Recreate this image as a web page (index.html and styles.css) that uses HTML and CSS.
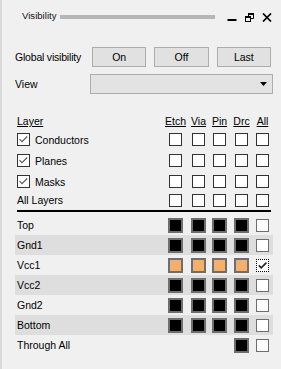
FILE: index.html
```html
<!DOCTYPE html>
<html>
<head>
<meta charset="utf-8">
<link rel="stylesheet" href="styles.css">
</head>
<body>
<div class="panel">
  <div class="titlebar">
    <span class="title">Visibility</span>
    <span class="grip"></span>
    <svg class="tb-icon tb-min" width="10" height="10" viewBox="0 0 10 10"><rect x="0.5" y="7" width="9" height="2" fill="#000"/></svg>
    <svg class="tb-icon tb-float" width="9" height="9" viewBox="0 0 9 9"><path d="M3.5 0.5h5v5h-5z" fill="none" stroke="#000" stroke-width="1"/><rect x="3" y="0" width="6" height="2" fill="#000"/><rect x="0.5" y="3.5" width="5" height="5" fill="#f0f0f0" stroke="#000" stroke-width="1"/><rect x="0" y="3" width="6" height="2" fill="#000"/></svg>
    <svg class="tb-icon tb-close" width="10" height="9" viewBox="0 0 10 9"><path d="M1 0.5L9 8.5M9 0.5L1 8.5" stroke="#000" stroke-width="1.7"/></svg>
  </div>
  <div class="content">
    <div class="form-row form-global">
      <span class="form-label tight">Global visibility</span>
      <div class="buttons">
        <button class="btn">On</button>
        <button class="btn">Off</button>
        <button class="btn">Last</button>
      </div>
    </div>
    <div class="form-row form-view">
      <span class="form-label">View</span>
      <div class="combo"><svg width="7" height="4" viewBox="0 0 7 4"><path d="M0 0h7L3.5 4z" fill="#000"/></svg></div>
    </div>

    <div class="grid-row head-row">
      <span class="row-label"><span class="u">Layer</span></span>
      <span class="slot"><span class="u">Etch</span></span>
      <span class="slot"><span class="u">Via</span></span>
      <span class="slot"><span class="u">Pin</span></span>
      <span class="slot"><span class="u">Drc</span></span>
      <span class="slot slot-all"><span class="u">All</span></span>
    </div>

    <div class="grid-row cat-row">
      <span class="row-label cat-label"><span class="chk"><svg width="11" height="11" viewBox="0 0 11 11"><path d="M1.5 5.2L4 7.7L9.2 2.5" fill="none" stroke="#5c5c5c" stroke-width="1.2"/></svg></span>Conductors</span>
      <span class="slot"><span class="box"></span></span>
      <span class="slot"><span class="box"></span></span>
      <span class="slot"><span class="box"></span></span>
      <span class="slot"><span class="box"></span></span>
      <span class="slot slot-all"><span class="box"></span></span>
    </div>
    <div class="grid-row cat-row">
      <span class="row-label cat-label"><span class="chk"><svg width="11" height="11" viewBox="0 0 11 11"><path d="M1.5 5.2L4 7.7L9.2 2.5" fill="none" stroke="#5c5c5c" stroke-width="1.2"/></svg></span>Planes</span>
      <span class="slot"><span class="box"></span></span>
      <span class="slot"><span class="box"></span></span>
      <span class="slot"><span class="box"></span></span>
      <span class="slot"><span class="box"></span></span>
      <span class="slot slot-all"><span class="box"></span></span>
    </div>
    <div class="grid-row cat-row">
      <span class="row-label cat-label"><span class="chk"><svg width="11" height="11" viewBox="0 0 11 11"><path d="M1.5 5.2L4 7.7L9.2 2.5" fill="none" stroke="#5c5c5c" stroke-width="1.2"/></svg></span>Masks</span>
      <span class="slot"><span class="box"></span></span>
      <span class="slot"><span class="box"></span></span>
      <span class="slot"><span class="box"></span></span>
      <span class="slot"><span class="box"></span></span>
      <span class="slot slot-all"><span class="box"></span></span>
    </div>
    <div class="grid-row all-row">
      <span class="row-label">All Layers</span>
      <span class="slot"><span class="box"></span></span>
      <span class="slot"><span class="box"></span></span>
      <span class="slot"><span class="box"></span></span>
      <span class="slot"><span class="box"></span></span>
      <span class="slot slot-all"><span class="box"></span></span>
    </div>

    <div class="sep"></div>

    <div class="grid-row layer-row">
      <span class="row-label">Top</span>
      <span class="slot"><span class="sw sw-black"></span></span>
      <span class="slot"><span class="sw sw-black"></span></span>
      <span class="slot"><span class="sw sw-black"></span></span>
      <span class="slot"><span class="sw sw-black"></span></span>
      <span class="slot slot-all"><span class="vbox"></span></span>
    </div>
    <div class="grid-row layer-row shaded">
      <span class="row-label">Gnd1</span>
      <span class="slot"><span class="sw sw-black"></span></span>
      <span class="slot"><span class="sw sw-black"></span></span>
      <span class="slot"><span class="sw sw-black"></span></span>
      <span class="slot"><span class="sw sw-black"></span></span>
      <span class="slot slot-all"><span class="vbox"></span></span>
    </div>
    <div class="grid-row layer-row">
      <span class="row-label">Vcc1</span>
      <span class="slot"><span class="sw sw-orange"></span></span>
      <span class="slot"><span class="sw sw-orange"></span></span>
      <span class="slot"><span class="sw sw-orange"></span></span>
      <span class="slot"><span class="sw sw-orange"></span></span>
      <span class="slot slot-all"><span class="vbox vbox-checked"><svg width="11" height="11" viewBox="0 0 11 11"><path d="M1.8 5.4L4.2 7.8L9.4 2.6" fill="none" stroke="#222" stroke-width="1.6"/></svg></span></span>
    </div>
    <div class="grid-row layer-row shaded">
      <span class="row-label">Vcc2</span>
      <span class="slot"><span class="sw sw-black"></span></span>
      <span class="slot"><span class="sw sw-black"></span></span>
      <span class="slot"><span class="sw sw-black"></span></span>
      <span class="slot"><span class="sw sw-black"></span></span>
      <span class="slot slot-all"><span class="vbox"></span></span>
    </div>
    <div class="grid-row layer-row">
      <span class="row-label">Gnd2</span>
      <span class="slot"><span class="sw sw-black"></span></span>
      <span class="slot"><span class="sw sw-black"></span></span>
      <span class="slot"><span class="sw sw-black"></span></span>
      <span class="slot"><span class="sw sw-black"></span></span>
      <span class="slot slot-all"><span class="vbox"></span></span>
    </div>
    <div class="grid-row layer-row shaded">
      <span class="row-label">Bottom</span>
      <span class="slot"><span class="sw sw-black"></span></span>
      <span class="slot"><span class="sw sw-black"></span></span>
      <span class="slot"><span class="sw sw-black"></span></span>
      <span class="slot"><span class="sw sw-black"></span></span>
      <span class="slot slot-all"><span class="vbox"></span></span>
    </div>
    <div class="grid-row layer-row">
      <span class="row-label">Through All</span>
      <span class="slot"></span>
      <span class="slot"></span>
      <span class="slot"></span>
      <span class="slot"><span class="sw sw-black"></span></span>
      <span class="slot slot-all"><span class="vbox"></span></span>
    </div>
  </div>
</div>
</body>
</html>
```

FILE: styles.css
```css
* { box-sizing: border-box; }

html, body {
  margin: 0;
  padding: 0;
  background: #f0f0f0;
}

body {
  font-family: "Liberation Sans", Arial, sans-serif;
  font-size: 10.5px;
  color: #000;
}

.panel {
  width: 281px;
  height: 369px;
  border-left: 2px solid #dadada;
  background: #f0f0f0;
}

/* title bar */
.titlebar {
  display: flex;
  align-items: flex-start;
  height: 32px;
  padding-left: 20px;
  padding-right: 9px;
}

.title {
  font-size: 9.6px;
  line-height: 12px;
  margin-top: 10px;
  color: #111;
}

.grip {
  flex: 1;
  height: 4px;
  margin-top: 15px;
  margin-left: 4px;
  margin-right: 12px;
  background: #b6b6b6;
}

.tb-icon { display: block; flex: none; }
.tb-min { margin-top: 12px; }
.tb-float { margin-top: 13px; margin-left: 8px; }
.tb-close { margin-top: 13px; margin-left: 8px; }

/* content */
.content {
  padding: 15px 8px 0 13px;
}

.form-row {
  display: flex;
  align-items: center;
  height: 20px;
}

.form-view { margin-top: 7px; }

.form-label {
  width: 75px;
  flex: none;
}

.tight { letter-spacing: -0.2px; }

.buttons {
  flex: 1;
  display: flex;
  gap: 8px;
  padding: 0 2px;
}

.btn {
  flex: 1;
  height: 20px;
  margin: 0;
  padding: 0;
  border: 1px solid #adadad;
  background: #e1e1e1;
  font-family: inherit;
  font-size: 10.5px;
  color: #000;
}

.combo {
  flex: 1;
  height: 20px;
  border: 1px solid #adadad;
  background: #e3e3e3;
  display: flex;
  align-items: center;
  justify-content: flex-end;
  padding-right: 5px;
}

.combo svg { display: block; }

/* table grid */
.grid-row {
  display: grid;
  grid-template-columns: 1fr 23px 21px 22px 22px 17px;
  align-items: center;
}

.row-label {
  padding-left: 2px;
  white-space: nowrap;
}

.slot {
  width: 15px;
  display: flex;
  justify-content: center;
  align-items: center;
  white-space: nowrap;
}

.slot-all { width: 13px; }

.u { text-decoration: underline; }

.head-row {
  height: 16px;
  margin-top: 19px;
}

.cat-row { height: 21px; }
.all-row { height: 16px; }

.cat-label {
  display: flex;
  align-items: center;
}

.chk {
  width: 13px;
  height: 13px;
  border: 1px solid #333;
  background: #fff;
  margin-right: 5px;
  flex: none;
  display: flex;
}

.chk svg { display: block; }

.box {
  width: 13px;
  height: 13px;
  border: 1px solid #333;
  background: #fff;
  display: block;
}

.sep {
  height: 2px;
  background: #000;
  margin: 2px 2px 3px 2px;
}

.layer-row { height: 20px; }

.shaded { background: #dedede; }

.sw {
  width: 15px;
  height: 15px;
  border: 2px solid #6e6e6e;
  display: block;
}

.sw-black { background: #000; }
.sw-orange { background: #f2b06b; }

.vbox {
  width: 13px;
  height: 13px;
  border: 1px solid #6e6e6e;
  background: #fff;
  display: flex;
}

.vbox-checked {
  border: 1px dotted #000;
}

.vbox svg { display: block; }
```
